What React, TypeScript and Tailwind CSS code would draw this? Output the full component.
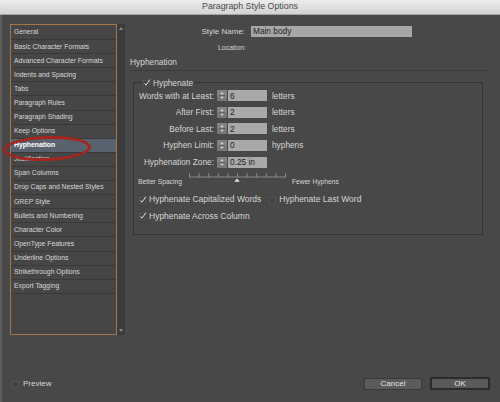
const items = [
  "General",
  "Basic Character Formats",
  "Advanced Character Formats",
  "Indents and Spacing",
  "Tabs",
  "Paragraph Rules",
  "Paragraph Shading",
  "Keep Options",
  "Hyphenation",
  "Justification",
  "Span Columns",
  "Drop Caps and Nested Styles",
  "GREP Style",
  "Bullets and Numbering",
  "Character Color",
  "OpenType Features",
  "Underline Options",
  "Strikethrough Options",
  "Export Tagging",
];

function Spinner() {
  return (
    <svg width="10" height="11" viewBox="0 0 10 11" className="shrink-0">
      <rect width="10" height="11" fill="#787878" />
      <rect width="10" height="5.5" fill="#828282" />
      <path d="M5 2 L6.8 4.3 H3.2 Z" fill="#d4d4d4" />
      <path d="M5 9 L6.8 6.7 H3.2 Z" fill="#d4d4d4" />
      <line x1="2" y1="5.5" x2="8" y2="5.5" stroke="#5a5a5a" strokeWidth="0.8" />
    </svg>
  );
}

function Check({ checked }: { checked: boolean }) {
  return (
    <svg width="8" height="8" viewBox="0 0 8 8" className="shrink-0">
      <rect x="0.5" y="1.5" width="6" height="6" fill="#424242" stroke="#5c5c5c" strokeWidth="0.6" />
      {checked && (
        <path d="M1.6 4.4 L3 6.2 L6.9 0.6" fill="none" stroke="#e2e2e2" strokeWidth="1" />
      )}
    </svg>
  );
}

function NumRow({ label, value, unit }: { label: string; value: string; unit?: string }) {
  return (
    <div className="flex h-[16.6px] items-center">
      <span className="w-[80px] text-right">{label}</span>
      <span className="ml-[3px] flex">
        <Spinner />
      </span>
      <span className="ml-[1px] flex h-[11px] w-[39px] items-center bg-[#a9a9a9] pl-[2px] text-[#222]">
        {value}
      </span>
      {unit && <span className="ml-[5px]">{unit}</span>}
    </div>
  );
}

function Slider() {
  const ticks = Array.from({ length: 11 }, (_, i) => 0.5 + i * 9.6);
  return (
    <svg width="97" height="11" viewBox="0 0 97 11" className="shrink-0">
      <line x1="0" y1="5" x2="97" y2="5" stroke="#9a9a9a" strokeWidth="0.8" />
      {ticks.map((x) => (
        <line key={x} x1={x} y1="1" x2={x} y2="5" stroke="#9a9a9a" strokeWidth="0.8" />
      ))}
      <path d="M48 6.5 L50.8 9.8 H45.2 Z" fill="#e0e0e0" />
    </svg>
  );
}

export default function App() {
  return (
    <div className="relative flex h-[402px] w-[500px] flex-col overflow-hidden bg-[#484848] font-['Liberation_Sans',Arial,sans-serif] text-[#d6d6d6]">
      <div className="flex h-[15px] shrink-0 items-center justify-center border-b border-[#a4a4a4] bg-gradient-to-b from-[#ededed] to-[#d2d2d2] text-[8.8px] text-[#4a4a4a]">
        Paragraph Style Options
      </div>

      <div className="flex flex-1 flex-col border-l-2 border-[#5e5e5e]">
        <div className="flex">
          <div className="ml-[8px] mt-[9px] flex">
            <div className="h-[311px] w-[107px] border border-[#a67548] bg-[#464646] pt-[1px]">
              {items.map((it) => (
                <div
                  key={it}
                  className={
                    it === "Hyphenation"
                      ? "flex h-[14.1px] items-center border-b border-[#393939] bg-[#5a6270] pl-[3px] text-[6.8px] font-bold text-white"
                      : "flex h-[14.1px] items-center border-b border-[#393939] pl-[3px] text-[6.8px] text-[#d8d8d8]"
                  }
                >
                  {it}
                </div>
              ))}
            </div>
            <div className="flex h-[311px] w-[8px] flex-col items-center justify-between bg-[#3b3b3b] py-[3px]">
              <svg width="4" height="3" viewBox="0 0 4 3">
                <path d="M2 0 L4 3 H0 Z" fill="#8a8a8a" />
              </svg>
              <svg width="4" height="3" viewBox="0 0 4 3">
                <path d="M2 3 L4 0 H0 Z" fill="#8a8a8a" />
              </svg>
            </div>
          </div>

          <div className="ml-[5px] flex w-[358px] flex-col text-[8.3px]">
            <div className="mt-[11px] flex h-[11px] items-center">
              <span className="w-[115px] text-right text-[8px]">Style Name:</span>
              <span className="ml-[6px] flex h-[11px] w-[161px] items-center bg-[#a7a7a7] pl-[2px] text-[#1e1e1e]">
                Main body
              </span>
            </div>
            <div className="mt-[6.5px] flex h-[9px] items-center">
              <span className="w-[116px] text-right text-[6.9px]">Location:</span>
            </div>
            <div className="mt-[3px] h-[15px] border-b border-[#3a3a3a] text-[8.4px] leading-[12px]">
              Hyphenation
            </div>

            <fieldset className="ml-[3px] mt-[7px] w-[350px] border border-[#343434] pb-[9px]">
              <legend className="ml-[8px] flex items-center px-[1px] leading-[10px]">
                <Check checked />
                <span className="ml-[2px]">Hyphenate</span>
              </legend>
              <NumRow label="Words with at Least:" value="6" unit="letters" />
              <NumRow label="After First:" value="2" unit="letters" />
              <NumRow label="Before Last:" value="2" unit="letters" />
              <NumRow label="Hyphen Limit:" value="0" unit="hyphens" />
              <NumRow label="Hyphenation Zone:" value="0.25 in" />

              <div className="flex h-[16px] items-start text-[6.7px]">
                <span className="mt-[7.7px] w-[55px] pl-[4px] leading-[8px]">Better Spacing</span>
                <span className="mt-[2px] flex">
                  <Slider />
                </span>
                <span className="ml-[6px] mt-[7.7px] leading-[8px]">Fewer Hyphens</span>
              </div>

              <div className="mt-[4.7px] flex h-[16.7px] items-center pl-[5px] text-[8.5px]">
                <Check checked />
                <span className="ml-[2px]">Hyphenate Capitalized Words</span>
                <span className="ml-[8px] flex">
                  <Check checked={false} />
                </span>
                <span className="ml-[2px]">Hyphenate Last Word</span>
              </div>
              <div className="flex h-[16.7px] items-center pl-[5px] text-[8.5px]">
                <Check checked />
                <span className="ml-[2px]">Hyphenate Across Column</span>
              </div>
            </fieldset>
          </div>
        </div>

        <div className="mb-[12px] mt-auto flex h-[13px] items-center">
          <span className="ml-[10px] flex">
            <Check checked={false} />
          </span>
          <span className="ml-[3px] text-[8px]">Preview</span>
          <button className="ml-auto flex h-[12px] w-[58px] items-center justify-center border border-[#383838] bg-[#5b5b5b] text-[8px] text-[#e0e0e0]">
            Cancel
          </button>
          <button className="ml-[8px] mr-[10px] flex h-[13px] w-[60px] items-center justify-center border-2 border-[#2c2c2c] bg-[#5a5a5a] text-[8px] text-[#e6e6e6]">
            OK
          </button>
        </div>
      </div>

      <div className="absolute left-[3px] top-[136px] h-[25px] w-[88px] -rotate-2 rounded-[50%] border-[3px] border-[#a3261f]" />
    </div>
  );
}
